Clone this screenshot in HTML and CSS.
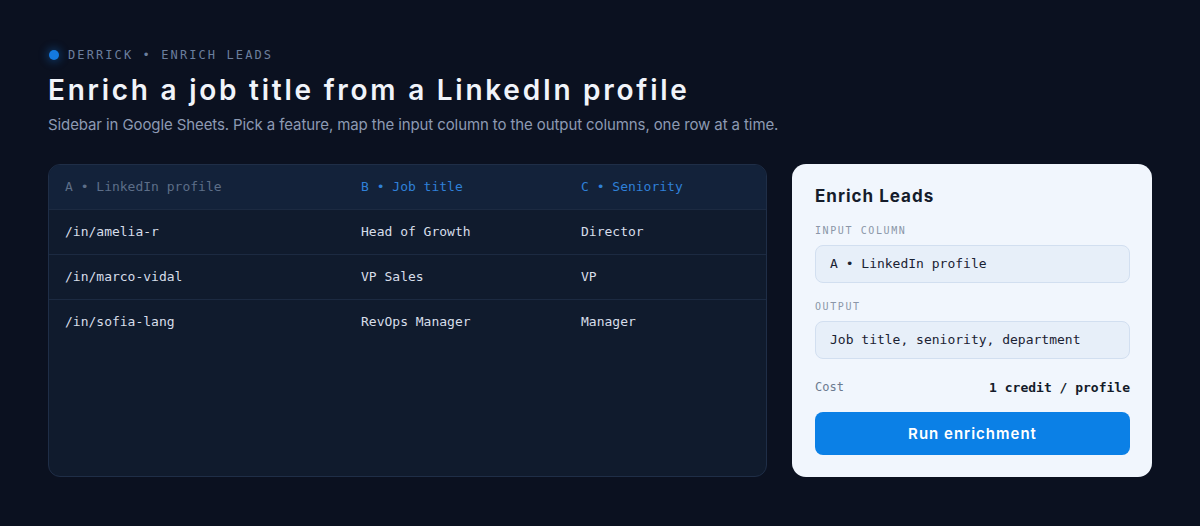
FILE: index.html
```html
<!DOCTYPE html>
<html lang="en">
<head>
  <meta charset="UTF-8">
  <meta name="viewport" content="width=device-width, initial-scale=1.0">
  <title>Derrick - Enrich Leads</title>
  <link rel="stylesheet" href="styles.css">
</head>
<body>
  <header class="intro">
    <div class="eyebrow"><span class="dot"></span>DERRICK • ENRICH LEADS</div>
    <h1>Enrich a job title from a LinkedIn profile</h1>
    <p class="lede">Sidebar in Google Sheets. Pick a feature, map the input column to the output columns, one row at a time.</p>
  </header>

  <main class="layout">
    <!-- Sheet preview -->
    <section class="sheet">
      <div class="row head">
        <div class="cell muted">A • LinkedIn profile</div>
        <div class="cell accent">B • Job title</div>
        <div class="cell accent">C • Seniority</div>
      </div>
      <div class="row">
        <div class="cell">/in/amelia-r</div>
        <div class="cell">Head of Growth</div>
        <div class="cell">Director</div>
      </div>
      <div class="row">
        <div class="cell">/in/marco-vidal</div>
        <div class="cell">VP Sales</div>
        <div class="cell">VP</div>
      </div>
      <div class="row">
        <div class="cell">/in/sofia-lang</div>
        <div class="cell">RevOps Manager</div>
        <div class="cell">Manager</div>
      </div>
    </section>

    <!-- Sidebar -->
    <aside class="panel">
      <h2>Enrich Leads</h2>
      <label class="field-label">INPUT COLUMN</label>
      <div class="field">A • LinkedIn profile</div>
      <label class="field-label">OUTPUT</label>
      <div class="field">Job title, seniority, department</div>
      <div class="cost">
        <span class="cost-label">Cost</span>
        <span class="cost-value">1 credit / profile</span>
      </div>
      <button class="run-btn">Run enrichment</button>
    </aside>
  </main>
</body>
</html>
```

FILE: styles.css
```css
body {
  margin: 0;
  padding: 44px 48px 48px;
  background-color: #0b1120;
  font-family: Inter, "Noto Sans", sans-serif;
  color: #e8edf5;
}

.intro {
  margin-bottom: 29px;
}

.eyebrow {
  display: flex;
  align-items: center;
  gap: 9px;
  font-family: "DejaVu Sans Mono", monospace;
  font-size: 12px;
  letter-spacing: 2.1px;
  color: #6b7f9e;
  height: 22px;
}

.dot {
  width: 10px;
  height: 10px;
  border-radius: 50%;
  background-color: #1479e0;
  box-shadow: 0 0 8px 2px rgba(20, 121, 224, 0.35);
  margin-left: 1px;
}

h1 {
  margin: 6px 0 0;
  font-size: 28px;
  font-weight: 600;
  letter-spacing: 2.75px;
  line-height: 36px;
  color: #f1f4fa;
}

.lede {
  margin: 7px 0 0;
  font-size: 15px;
  letter-spacing: -0.1px;
  color: #8d9ab3;
  line-height: 20px;
}

.layout {
  display: flex;
  gap: 25px;
}

/* Sheet preview */
.sheet {
  flex: 0 0 717px;
  height: 311px;
  border: 1px solid #1f2e47;
  border-radius: 12px;
  background-color: #101b2d;
  overflow: hidden;
  font-family: "DejaVu Sans Mono", monospace;
  font-size: 13px;
}

.row {
  display: grid;
  grid-template-columns: 296px 220px 1fr;
  height: 45px;
  align-items: center;
  border-bottom: 1px solid #1c2a41;
  box-sizing: border-box;
  color: #d7deea;
}

.row:last-child {
  border-bottom: none;
}

.row.head {
  background-color: #13223a;
}

.cell {
  padding: 0 0 2px 16px;
}

.muted {
  color: #5d6e88;
}

.accent {
  color: #2f80d8;
}

/* Sidebar */
.panel {
  flex: 1;
  height: 313px;
  box-sizing: border-box;
  background-color: #f1f6fd;
  border-radius: 14px;
  padding: 20px 22px 22px 23px;
  color: #141b2a;
}

.panel h2 {
  margin: 0 0 16px;
  font-size: 17px;
  font-weight: 700;
  letter-spacing: 1px;
  line-height: 24px;
  color: #151c2b;
}

.field-label {
  display: block;
  font-family: "DejaVu Sans Mono", monospace;
  font-size: 10px;
  line-height: 14px;
  letter-spacing: 1.6px;
  color: #8b96a8;
  margin-bottom: 7px;
}

.field {
  height: 38px;
  box-sizing: border-box;
  border: 1px solid #d2dff0;
  border-radius: 8px;
  background-color: #e7eff9;
  padding: 0 14px 1px;
  display: flex;
  align-items: center;
  font-family: "DejaVu Sans Mono", monospace;
  font-size: 13px;
  color: #1a2233;
  margin-bottom: 17px;
}

.cost {
  display: flex;
  justify-content: space-between;
  align-items: center;
  height: 16px;
  font-family: "DejaVu Sans Mono", monospace;
  margin: 20px 0 17px;
}

.cost-label {
  font-size: 12px;
  color: #6c7a90;
}

.cost-value {
  font-size: 13px;
  font-weight: bold;
  color: #141b2a;
}

.run-btn {
  display: block;
  width: 100%;
  height: 43px;
  border: none;
  border-radius: 8px;
  background-color: #0b80e6;
  color: #fff;
  font-family: Inter, "Noto Sans", sans-serif;
  font-size: 15px;
  font-weight: 600;
  letter-spacing: 1px;
  cursor: pointer;
}
```
